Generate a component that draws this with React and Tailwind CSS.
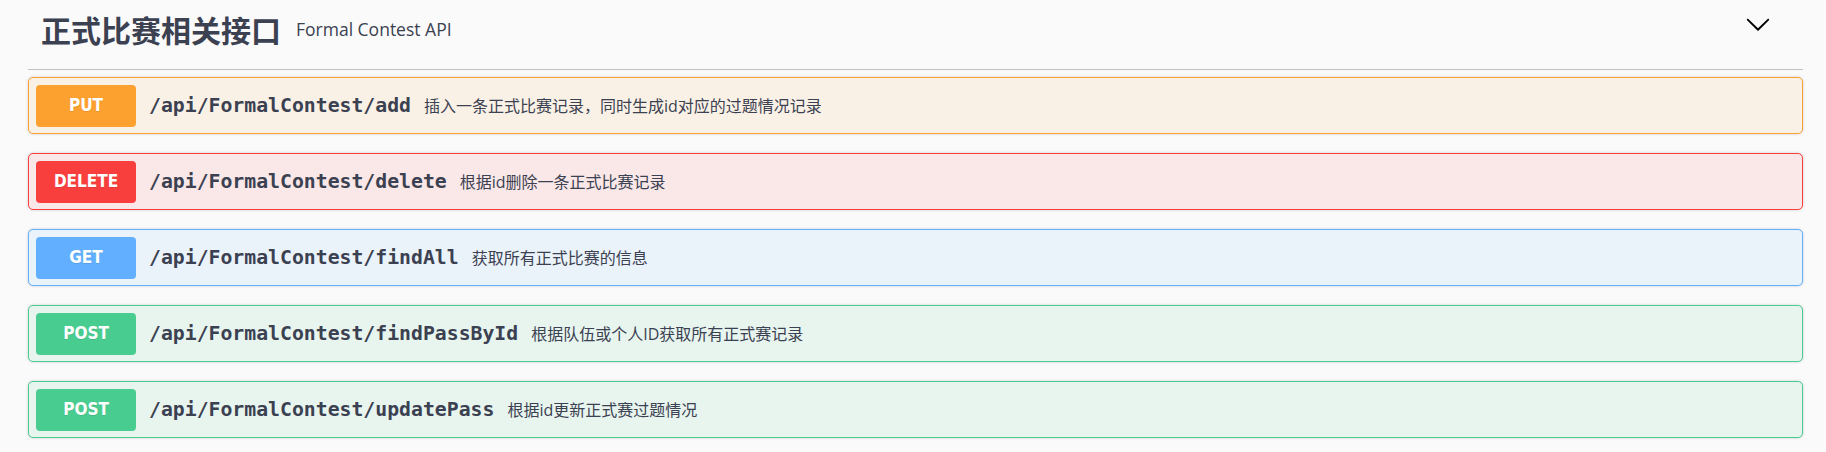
const ops = [
  { method: 'PUT', path: '/api/FormalContest/add', desc: '插入一条正式比赛记录，同时生成id对应的过题情况记录', badge: 'bg-[#fca130]', box: 'border-[#fca130] bg-[#faf1e6]' },
  { method: 'DELETE', path: '/api/FormalContest/delete', desc: '根据id删除一条正式比赛记录', badge: 'bg-[#f93e3e]', box: 'border-[#f93e3e] bg-[#fae7e7]' },
  { method: 'GET', path: '/api/FormalContest/findAll', desc: '获取所有正式比赛的信息', badge: 'bg-[#61affe]', box: 'border-[#61affe] bg-[#ebf3fa]' },
  { method: 'POST', path: '/api/FormalContest/findPassById', desc: '根据队伍或个人ID获取所有正式赛记录', badge: 'bg-[#49cc90]', box: 'border-[#49cc90] bg-[#e8f5ef]' },
  { method: 'POST', path: '/api/FormalContest/updatePass', desc: '根据id更新正式赛过题情况', badge: 'bg-[#49cc90]', box: 'border-[#49cc90] bg-[#e8f5ef]' },
]

function OpBlock({ op }) {
  return (
    <div className={`flex items-center h-[57px] pl-[7px] mb-[19px] border rounded-[5px] shadow-[0_0_3px_rgba(0,0,0,0.19)] ${op.box}`}>
      <span
        className={`w-[100px] h-[42px] shrink-0 flex items-center justify-center rounded-[4px] text-white font-bold text-[17px] [text-shadow:0_1px_0_rgba(0,0,0,0.1)] ${op.badge}`}
        style={{ fontFamily: '"Liberation Sans Narrow", "DejaVu Sans Condensed", "Liberation Sans", sans-serif', fontStretch: 'condensed' }}
      >
        {op.method}
      </span>
      <span className="px-[13px] text-[19.8px] font-bold text-[#3b4151] font-['DejaVu_Sans_Mono',monospace]">
        {op.path}
      </span>
      <span className="text-[16px] text-[#3b4151] font-['Open_Sans','Noto_Sans_CJK_SC',sans-serif]">
        {op.desc}
      </span>
    </div>
  )
}

export default function App() {
  return (
    <div className="min-h-[452px] bg-[#fafafa] pl-[28px] pr-[23px]">
      <div className="pb-[11px] border-b border-[#3b4151]/30">
        <div className="h-[58px] flex items-center pl-[13px] pr-[32px]">
          <h4 className="text-[30px] font-bold text-[#3b4151] leading-none font-['Noto_Sans_CJK_SC',sans-serif]">
            正式比赛相关接口
          </h4>
          <small className="pl-[15px] text-[17.5px] text-[#3b4151] font-['Open_Sans',sans-serif]">
            Formal Contest API
          </small>
          <svg className="ml-auto w-[26px] h-[26px] mb-[11px]" viewBox="0 0 20 20" fill="#000">
            <path d="M17.418 6.109c.272-.268.709-.268.979 0s.271.701 0 .969l-7.908 7.83c-.27.268-.707.268-.979 0l-7.908-7.83c-.27-.268-.27-.701 0-.969.271-.268.709-.268.979 0L10 13.25l7.418-7.141z" />
          </svg>
        </div>
      </div>
      <div className="pt-[7px]">
        {ops.map((op) => (
          <OpBlock key={op.path} op={op} />
        ))}
      </div>
    </div>
  )
}
